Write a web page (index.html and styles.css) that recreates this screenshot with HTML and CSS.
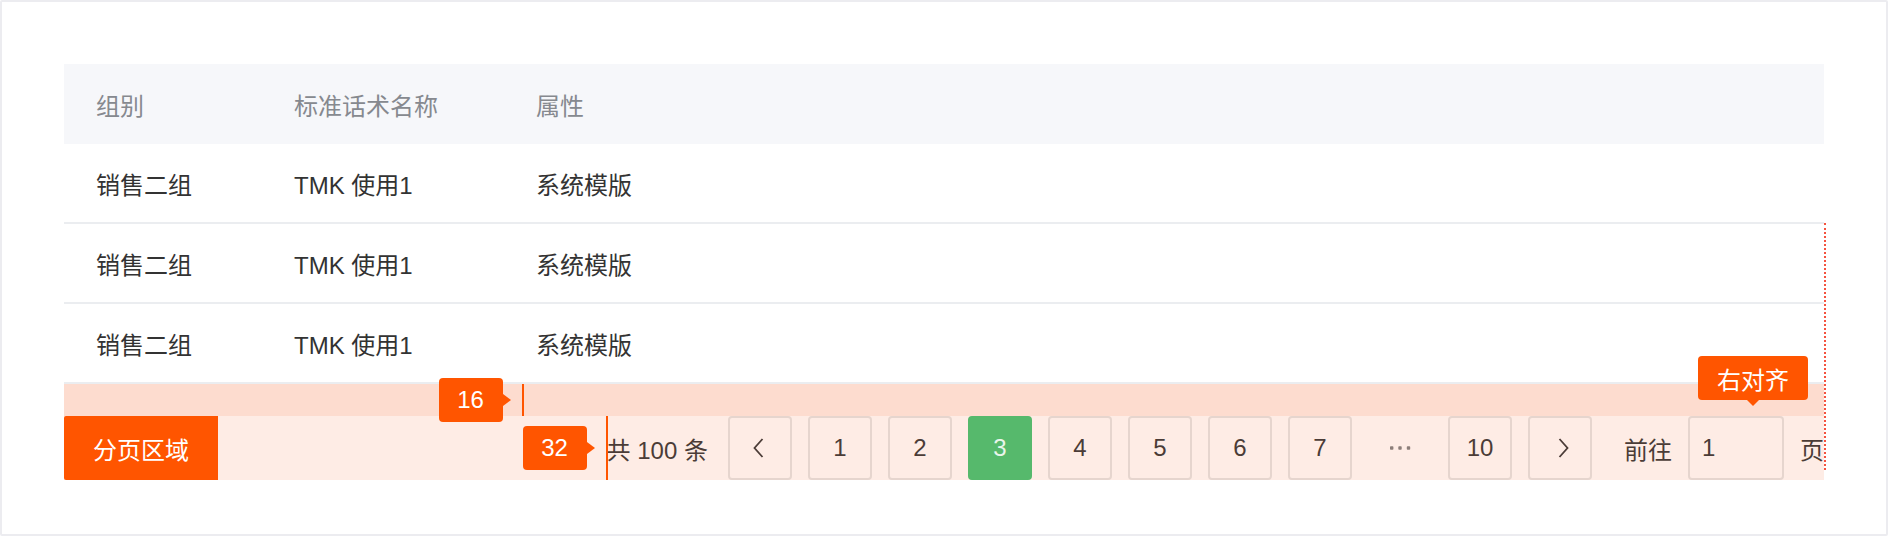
FILE: index.html
```html
<!DOCTYPE html>
<html lang="zh-CN">
<head>
<meta charset="utf-8">
<title>分页区域</title>
<link rel="stylesheet" href="styles.css">
</head>
<body>
<div class="frame">
  <div class="table">
    <div class="row head">
      <div class="cell">组别</div>
      <div class="cell">标准话术名称</div>
      <div class="cell">属性</div>
    </div>
    <div class="row">
      <div class="cell">销售二组</div>
      <div class="cell">TMK 使用1</div>
      <div class="cell">系统模版</div>
    </div>
    <div class="row">
      <div class="cell">销售二组</div>
      <div class="cell">TMK 使用1</div>
      <div class="cell">系统模版</div>
    </div>
    <div class="row">
      <div class="cell">销售二组</div>
      <div class="cell">TMK 使用1</div>
      <div class="cell">系统模版</div>
    </div>
  </div>
  <div class="gap-band"></div>
  <div class="pager-band">
    <div class="area-label">分页区域</div>
    <div class="pager">
      <div class="total"><span class="total-text">共 100 条</span><span class="mark-line mark-line-16"></span><span class="badge badge-16">16</span><span class="mark-line mark-line-32"></span><span class="badge badge-32">32</span></div>
      <div class="pbtn"><svg class="chev chev-left" width="12" height="20" viewBox="0 0 12 20"><polyline points="9.5,1 1.5,10 9.5,19" fill="none" stroke="currentColor" stroke-width="1.8"/></svg></div>
      <div class="pbtn">1</div>
      <div class="pbtn">2</div>
      <div class="pbtn active">3</div>
      <div class="pbtn">4</div>
      <div class="pbtn">5</div>
      <div class="pbtn">6</div>
      <div class="pbtn">7</div>
      <div class="pbtn more"><svg width="21" height="4" viewBox="0 0 21 4"><rect x="0" y="0.3" width="3.4" height="3.4" rx="0.8" fill="currentColor"/><rect x="8.3" y="0.3" width="3.4" height="3.4" rx="0.8" fill="currentColor"/><rect x="16.8" y="0.3" width="3.4" height="3.4" rx="0.8" fill="currentColor"/></svg></div>
      <div class="pbtn">10</div>
      <div class="pbtn next"><svg class="chev chev-right" width="12" height="20" viewBox="0 0 12 20"><polyline points="2.5,1 10.5,10 2.5,19" fill="none" stroke="currentColor" stroke-width="1.8"/></svg></div>
      <span class="jump-label">前往</span>
      <div class="pinput"><span>1</span><span class="tip">右对齐</span></div>
      <span class="jump-suffix">页</span>
    </div>
  </div>
  <span class="edge-guide"></span>
</div>
</body>
</html>
```

FILE: styles.css
```css
* { box-sizing: border-box; }

body {
  margin: 0;
  background: #ffffff;
  font-family: "Liberation Sans", "Noto Sans CJK SC", sans-serif;
}

.frame {
  position: relative;
  height: 536px;
  border: 2px solid #ececf0;
  border-radius: 2px;
  padding: 62px 62px 0;
  background: #ffffff;
}

.row {
  display: grid;
  grid-template-columns: 198px 242px 1fr;
  align-items: center;
  height: 80px;
  border-bottom: 2px solid #ebedf0;
  font-size: 24px;
  color: #333333;
}

.row.head {
  background: #f6f7fa;
  border-bottom: none;
  color: #86898f;
}

.cell {
  padding-left: 32px;
  white-space: nowrap;
}

.gap-band {
  height: 32px;
  background: #fddccf;
}

.pager-band {
  height: 64px;
  background: #feece5;
  display: flex;
  justify-content: space-between;
  align-items: stretch;
}

.area-label {
  width: 154px;
  background: #ff5500;
  color: #ffffff;
  font-size: 24px;
  display: flex;
  align-items: center;
  justify-content: center;
  border-radius: 2px 0 0 2px;
}

.pager {
  display: flex;
  align-items: center;
  font-size: 24px;
  color: #4b3c37;
}

.total {
  position: relative;
  height: 64px;
  display: flex;
  align-items: center;
  margin-right: 20px;
  white-space: nowrap;
}

.pbtn {
  width: 64px;
  height: 64px;
  border: 2px solid #e6d5ce;
  border-radius: 4px;
  display: flex;
  align-items: center;
  justify-content: center;
  margin-right: 16px;
}

.pbtn.active {
  background: #56b96c;
  border-color: #56b96c;
  color: #e9f5eb;
}

.pbtn.more {
  border-color: transparent;
  color: #8c7e79;
}

.pbtn.next {
  margin-right: 32px;
}

.chev-left { margin-left: -3px; }
.chev-right { margin-left: 6px; }

.jump-label {
  margin-right: 16px;
}

.pinput {
  position: relative;
  width: 96px;
  height: 64px;
  border: 2px solid #e6d5ce;
  border-radius: 4px;
  display: flex;
  align-items: center;
  padding-left: 12px;
  margin-right: 16px;
}

/* annotation overlays */
.mark-line {
  position: absolute;
  width: 2px;
  background: #ff5500;
}

.mark-line-32 {
  left: -1px;
  top: 0;
  height: 64px;
}

.mark-line-16 {
  left: -85px;
  top: -32px;
  height: 32px;
}

.badge {
  position: absolute;
  width: 64px;
  height: 44px;
  background: #ff5500;
  color: #ffffff;
  border-radius: 4px;
  font-size: 24px;
  display: flex;
  align-items: center;
  justify-content: center;
}

.badge::after {
  content: "";
  position: absolute;
  right: -8px;
  top: 50%;
  margin-top: -6px;
  border-left: 8px solid #ff5500;
  border-top: 6px solid transparent;
  border-bottom: 6px solid transparent;
}

.badge-16 {
  left: -168px;
  top: -38px;
}

.badge-32 {
  left: -84px;
  top: 10px;
}

.tip {
  position: absolute;
  left: 8px;
  top: -62px;
  width: 110px;
  height: 44px;
  background: #ff5500;
  color: #ffffff;
  border-radius: 4px;
  font-size: 24px;
  display: flex;
  align-items: center;
  justify-content: center;
  white-space: nowrap;
}

.tip::after {
  content: "";
  position: absolute;
  left: 50%;
  margin-left: -6px;
  bottom: -6px;
  border-top: 6px solid #ff5500;
  border-left: 6px solid transparent;
  border-right: 6px solid transparent;
}

.edge-guide {
  position: absolute;
  right: 60px;
  top: 221px;
  height: 247px;
  border-left: 2px dotted #f5533f;
}
```
